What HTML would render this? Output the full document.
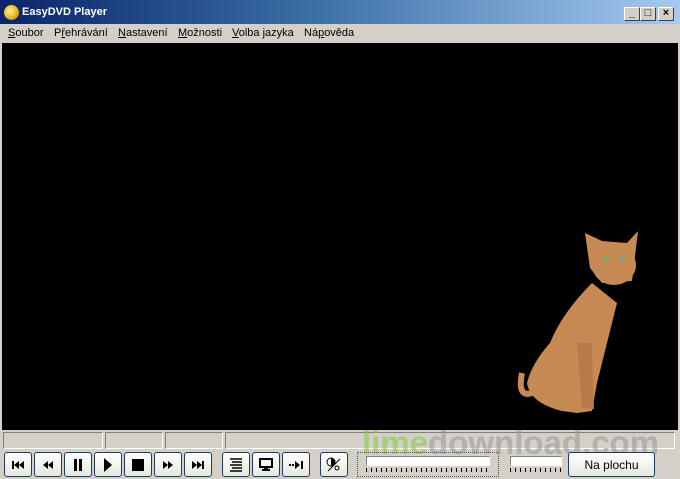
<!DOCTYPE html>
<html><head><style>
*{margin:0;padding:0;box-sizing:border-box}
body{width:680px;height:479px;background:#d4d0c8;font-family:Tahoma,"Liberation Sans",sans-serif;font-size:11px;position:relative;overflow:hidden}
.title{position:absolute;left:0;top:0;width:680px;height:24px;background:linear-gradient(90deg,#0a246a 0%,#3a6ea5 45%,#a6caf0 100%);color:#fff;font-weight:bold;font-size:11px}
.title span{position:absolute;left:22px;top:6px}
.ico{position:absolute;left:4px;top:5px;width:15px;height:15px;border-radius:50%;background:radial-gradient(circle at 40% 40%,#fff6a0,#e0a000 70%,#805000)}
.wb{position:absolute;top:7px;width:16px;height:14px;background:#d4d0c8;border:1px solid;border-color:#fff #404040 #404040 #fff;font-size:11px;line-height:11px;text-align:center;color:#000;font-weight:bold}
.menu{position:absolute;top:24px;left:0;width:680px;height:19px;color:#000}
.menu span{position:absolute;top:3px}
.video{position:absolute;left:2px;top:43px;width:676px;height:387px;background:#000}
.stat{position:absolute;top:432px;height:17px;border:1px solid;border-color:#808080 #fff #fff #808080}
.btn{position:absolute;top:452px;width:28px;height:25px;border:1px solid #1c3a6a;border-radius:3px;background:linear-gradient(#fff,#e8e8e0);display:flex;align-items:center;justify-content:center}
.wm{position:absolute;left:362px;top:424px;font:bold 33px "Liberation Sans",sans-serif;color:rgba(150,150,150,.55);white-space:nowrap}
.wm b{color:rgba(130,200,60,.55)}
</style></head><body>
<div class="title"><div class="ico"></div><span>EasyDVD Player</span>
<div class="wb" style="left:624px">_</div><div class="wb" style="left:640px">□</div><div class="wb" style="left:658px">×</div></div>
<div class="menu">
<span style="left:8px"><u>S</u>oubor</span><span style="left:54px">P<u>ř</u>ehrávání</span><span style="left:118px"><u>N</u>astavení</span><span style="left:178px"><u>M</u>ožnosti</span><span style="left:232px"><u>V</u>olba jazyka</span><span style="left:304px">Ná<u>p</u>ověda</span></div>
<div class="video">
<svg width="676" height="387" style="position:absolute;left:0;top:0">
<g fill="#c88a55">
<path d="M583 190 L588 225 L600 240 L630 238 L636 188 L625 200 L600 198 Z"/>
<ellipse cx="612" cy="222" rx="22" ry="20"/>
<path d="M590 240 Q560 270 548 300 Q530 320 525 340 Q528 360 560 368 L575 370 L590 368 L595 340 Q605 300 615 260 Z"/>
<path d="M575 300 L580 365 L592 366 L590 300 Z" fill="#b87a48"/>
<path d="M530 350 Q515 355 520 330" stroke="#c88a55" stroke-width="6" fill="none"/>
</g>
<ellipse cx="604" cy="216" rx="3" ry="2" fill="#6a8"/><ellipse cx="620" cy="216" rx="3" ry="2" fill="#6a8"/>
</svg></div>
<div class="stat" style="left:3px;width:100px"></div>
<div class="stat" style="left:105px;width:58px"></div>
<div class="stat" style="left:165px;width:58px"></div>
<div class="stat" style="left:225px;width:450px"></div>
<div class="wm"><b>lime</b>download.com</div>
<div class="btn" style="left:4px"><svg width="12" height="10"><rect x="0" y="1" width="2" height="8"/><path d="M7 1V9L2 5ZM12 1V9L7 5Z"/></svg></div>
<div class="btn" style="left:34px"><svg width="10" height="10"><path d="M5 1V9L0 5ZM10 1V9L5 5Z"/></svg></div>
<div class="btn" style="left:64px"><svg width="10" height="12"><rect x="1" y="0" width="3" height="12"/><rect x="6" y="0" width="3" height="12"/></svg></div>
<div class="btn" style="left:94px"><svg width="10" height="14"><path d="M1 0V14L9 7Z"/></svg></div>
<div class="btn" style="left:124px"><svg width="12" height="12"><rect width="12" height="12"/></svg></div>
<div class="btn" style="left:154px"><svg width="10" height="10"><path d="M0 1V9L5 5ZM5 1V9L10 5Z"/></svg></div>
<div class="btn" style="left:184px"><svg width="12" height="10"><path d="M0 1V9L5 5ZM5 1V9L10 5Z"/><rect x="10" y="1" width="2" height="8"/></svg></div>
<div class="btn" style="left:222px"><svg width="12" height="14"><path d="M0 1h12M2 4h10M0 7h12M2 10h10M0 13h12" stroke="#000" stroke-width="1.5"/></svg></div>
<div class="btn" style="left:252px"><svg width="14" height="14"><rect x="1" y="1" width="12" height="8" fill="none" stroke="#000" stroke-width="2"/><rect x="5" y="9" width="4" height="2"/><rect x="3" y="11" width="8" height="2"/></svg></div>
<div class="btn" style="left:282px"><svg width="14" height="10"><rect x="0" y="4" width="2" height="2"/><rect x="3" y="4" width="2" height="2"/><path d="M6 1V9L11 5Z"/><rect x="12" y="1" width="2" height="8"/></svg></div>
<div class="btn" style="left:320px"><svg width="16" height="16"><circle cx="5" cy="5" r="4" fill="none" stroke="#000"/><path d="M5 1A4 4 0 0 1 5 9Z"/><path d="M2 14L14 2" stroke="#000"/><circle cx="11" cy="11" r="2" fill="none" stroke="#000"/></svg></div>
<div style="position:absolute;left:357px;top:452px;width:142px;height:25px;border:1px dotted #555"></div>
<div style="position:absolute;left:366px;top:456px;width:124px;height:10px;border:1px solid;border-color:#808080 #fff #fff #808080;background:#fff"></div>
<div style="position:absolute;left:366px;top:468px;width:124px;height:4px;background:repeating-linear-gradient(90deg,#000 0 1px,transparent 1px 5px)"></div>
<div style="position:absolute;left:510px;top:456px;width:52px;height:10px;border:1px solid;border-color:#808080 #fff #fff #808080;background:#fff"></div>
<div style="position:absolute;left:510px;top:468px;width:52px;height:4px;background:repeating-linear-gradient(90deg,#000 0 1px,transparent 1px 5px)"></div>
<div class="btn" style="left:568px;width:87px;font-size:12px">Na plochu</div>
</body></html>
